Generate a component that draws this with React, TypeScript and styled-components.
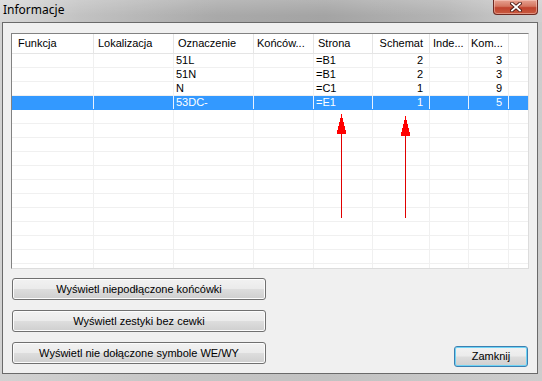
import React from 'react';
import styled, { createGlobalStyle } from 'styled-components';

const GlobalStyle = createGlobalStyle`
  html, body { margin: 0; padding: 0; background: #cfcfcf; }
  body { font-family: "Liberation Sans", Arial, sans-serif; }
`;

const Window = styled.div`
  width: 542px;
  height: 381px;
  box-sizing: border-box;
  display: flex;
  flex-direction: column;
  overflow: hidden;
  background: linear-gradient(90deg, #d2d2d2 0%, #c6c6c6 30%, #c2c2c2 60%, #cdcdcd 100%);
`;

const TitleBar = styled.div`
  height: 22px;
  flex: none;
  display: flex;
  justify-content: space-between;
  align-items: flex-start;
  background:
    linear-gradient(180deg, rgba(255, 255, 255, 0.18) 0%, rgba(255, 255, 255, 0) 70%),
    linear-gradient(90deg, #d8d8d8 0%, #c2c2c2 15%, #a9a9a9 40%, #a4a4a4 60%, #b4b4b4 82%, #d0d0d0 100%);
`;

const Title = styled.div`
  margin: 2px 0 0 3px;
  font-family: "Noto Sans", "Open Sans", sans-serif;
  font-size: 12px;
  line-height: 16px;
  color: #000;
`;

const CloseButton = styled.div`
  width: 45px;
  height: 15px;
  margin-right: 4px;
  box-sizing: border-box;
  border: 1px solid #6e2a22;
  border-top: none;
  border-radius: 0 0 4px 4px;
  display: flex;
  align-items: center;
  justify-content: center;
  background: linear-gradient(180deg, #e7a291 0%, #d47660 45%, #c0432d 55%, #c85a40 100%);
  box-shadow: inset 0 0 0 1px rgba(255, 220, 210, 0.45);
`;

const ClientArea = styled.div`
  flex: 1;
  margin: 0 4px 7px 2px;
  border: 1px solid #6a6a6a;
  background: #f0f0f0;
  box-sizing: border-box;
  display: flex;
  flex-direction: column;
  padding: 10px 8px 6px 8px;
`;

const ListBox = styled.div`
  position: relative;
  height: 236px;
  flex: none;
  box-sizing: border-box;
  border: 1px solid;
  border-color: #828282 #dcdcdc #dcdcdc #828282;
  background: #fff;
  overflow: hidden;
`;

const HeaderRow = styled.div`
  display: flex;
  height: 20px;
  box-sizing: border-box;
  border-bottom: 1px solid #e5e5e5;
  background: #fff;
`;

const HeaderCell = styled.div<{ $w: number; $right?: boolean; $pad: number; $last?: boolean }>`
  width: ${(p) => p.$w}px;
  flex: none;
  box-sizing: border-box;
  border-right: ${(p) => (p.$last ? 'none' : '1px solid #e5e5e5')};
  padding: 0 6px 0 ${(p) => p.$pad}px;
  text-align: ${(p) => (p.$right ? 'right' : 'left')};
  font-size: 11px;
  line-height: 19px;
  color: #000;
  white-space: nowrap;
  overflow: hidden;
`;

const Row = styled.div<{ $selected?: boolean }>`
  display: flex;
  height: 14px;
  box-sizing: border-box;
  border-bottom: 1px solid ${(p) => (p.$selected ? '#3399ff' : '#f0f0f0')};
  background: ${(p) => (p.$selected ? '#3399ff' : '#fff')};
  color: ${(p) => (p.$selected ? '#fff' : '#000')};
`;

const Cell = styled.div<{ $w: number; $right?: boolean; $last?: boolean; $selected?: boolean }>`
  width: ${(p) => p.$w}px;
  flex: none;
  box-sizing: border-box;
  border-right: ${(p) => (p.$last ? 'none' : `1px solid ${p.$selected ? '#e8f2ff' : '#f0f0f0'}`)};
  padding: 0 6px 0 2px;
  text-align: ${(p) => (p.$right ? 'right' : 'left')};
  font-size: 11px;
  line-height: 13px;
  white-space: nowrap;
  overflow: hidden;
`;

const Overlay = styled.svg`
  position: absolute;
  left: 0;
  top: 0;
  pointer-events: none;
`;

const BottomRow = styled.div`
  margin-top: 9px;
  padding: 0 1px;
  display: flex;
  justify-content: space-between;
  align-items: flex-end;
`;

const ButtonColumn = styled.div`
  display: flex;
  flex-direction: column;
  gap: 10px;
  padding-bottom: 3px;
`;

const Button = styled.button<{ $w: number; $h: number; $default?: boolean }>`
  width: ${(p) => p.$w}px;
  height: ${(p) => p.$h}px;
  box-sizing: border-box;
  margin: 0;
  padding: 0;
  border: 1px solid ${(p) => (p.$default ? '#3c7fb1' : '#707070')};
  border-radius: 3px;
  background: linear-gradient(180deg, #f2f2f2 0%, #ebebeb 48%, #dddddd 52%, #cfcfcf 100%);
  box-shadow: inset 0 0 0 1px ${(p) => (p.$default ? '#6fd4f5' : '#fcfcfc')};
  font-family: "Liberation Sans", Arial, sans-serif;
  font-size: 11px;
  line-height: 13px;
  color: #000;
  text-align: center;
`;

type Col = { label: string; w: number; headRight?: boolean; dataRight?: boolean; pad: number; key: string };

const columns: Col[] = [
  { label: 'Funkcja', w: 82, pad: 6, key: 'f' },
  { label: 'Lokalizacja', w: 80, pad: 4, key: 'l' },
  { label: 'Oznaczenie', w: 80, pad: 4, key: 'o' },
  { label: 'Końców...', w: 60, pad: 3, key: 'k' },
  { label: 'Strona', w: 59, pad: 4, key: 's' },
  { label: 'Schemat', w: 57, pad: 4, headRight: true, dataRight: true, key: 'sc' },
  { label: 'Inde...', w: 39, pad: 3, key: 'i' },
  { label: 'Kom...', w: 40, pad: 2, dataRight: true, key: 'km' },
];
const FILLER = 19;

type RowData = Record<string, string> & { sel?: string };

const rows: RowData[] = [
  { o: '51L', s: '=B1', sc: '2', km: '3' },
  { o: '51N', s: '=B1', sc: '2', km: '3' },
  { o: 'N', s: '=C1', sc: '1', km: '9' },
  { o: '53DC-', s: '=E1', sc: '1', km: '5', sel: '1' },
];
const EMPTY_ROWS = 12;

const Arrow: React.FC<{ x: number; top: number; base: number; end: number }> = ({ x, top, base, end }) => (
  <g shapeRendering="crispEdges">
    <line x1={x + 0.5} y1={base} x2={x + 0.5} y2={end} stroke="#e00000" strokeWidth={1} />
    <polygon points={`${x + 0.5},${top} ${x + 5.5},${base + 1} ${x - 4.5},${base + 1}`} fill="#ff0000" />
  </g>
);

export default function App() {
  const allRows: RowData[] = [...rows, ...Array.from({ length: EMPTY_ROWS }, () => ({} as RowData))];
  return (
    <>
      <GlobalStyle />
      <Window>
        <TitleBar>
          <Title>Informacje</Title>
          <CloseButton>
            <svg width="12" height="10" viewBox="0 0 12 10">
              <path d="M2 1.5 L10 8.5 M10 1.5 L2 8.5" stroke="#4a1a14" strokeWidth="3.6" strokeLinecap="square" />
              <path d="M2 1.5 L10 8.5 M10 1.5 L2 8.5" stroke="#ffffff" strokeWidth="1.8" strokeLinecap="square" />
            </svg>
          </CloseButton>
        </TitleBar>
        <ClientArea>
          <ListBox>
            <HeaderRow>
              {columns.map((c) => (
                <HeaderCell key={c.key} $w={c.w} $right={c.headRight} $pad={c.pad}>
                  {c.label}
                </HeaderCell>
              ))}
              <HeaderCell $w={FILLER} $pad={0} $last />
            </HeaderRow>
            {allRows.map((r, i) => (
              <Row key={i} $selected={!!r.sel}>
                {columns.map((c) => (
                  <Cell key={c.key} $w={c.w} $right={c.dataRight} $selected={!!r.sel}>
                    {r[c.key] ?? ''}
                  </Cell>
                ))}
                <Cell $w={FILLER} $last />
              </Row>
            ))}
            <Overlay width="516" height="234" viewBox="12 34 516 234">
              <Arrow x={341} top={114} base={133} end={218} />
              <Arrow x={405} top={116} base={135} end={218} />
            </Overlay>
          </ListBox>
          <BottomRow>
            <ButtonColumn>
              <Button $w={254} $h={22}>Wyświetl niepodłączone końcówki</Button>
              <Button $w={254} $h={22}>Wyświetl zestyki bez cewki</Button>
              <Button $w={254} $h={22}>Wyświetl nie dołączone symbole WE/WY</Button>
            </ButtonColumn>
            <Button $w={74} $h={21} $default>Zamknij</Button>
          </BottomRow>
        </ClientArea>
      </Window>
    </>
  );
}
